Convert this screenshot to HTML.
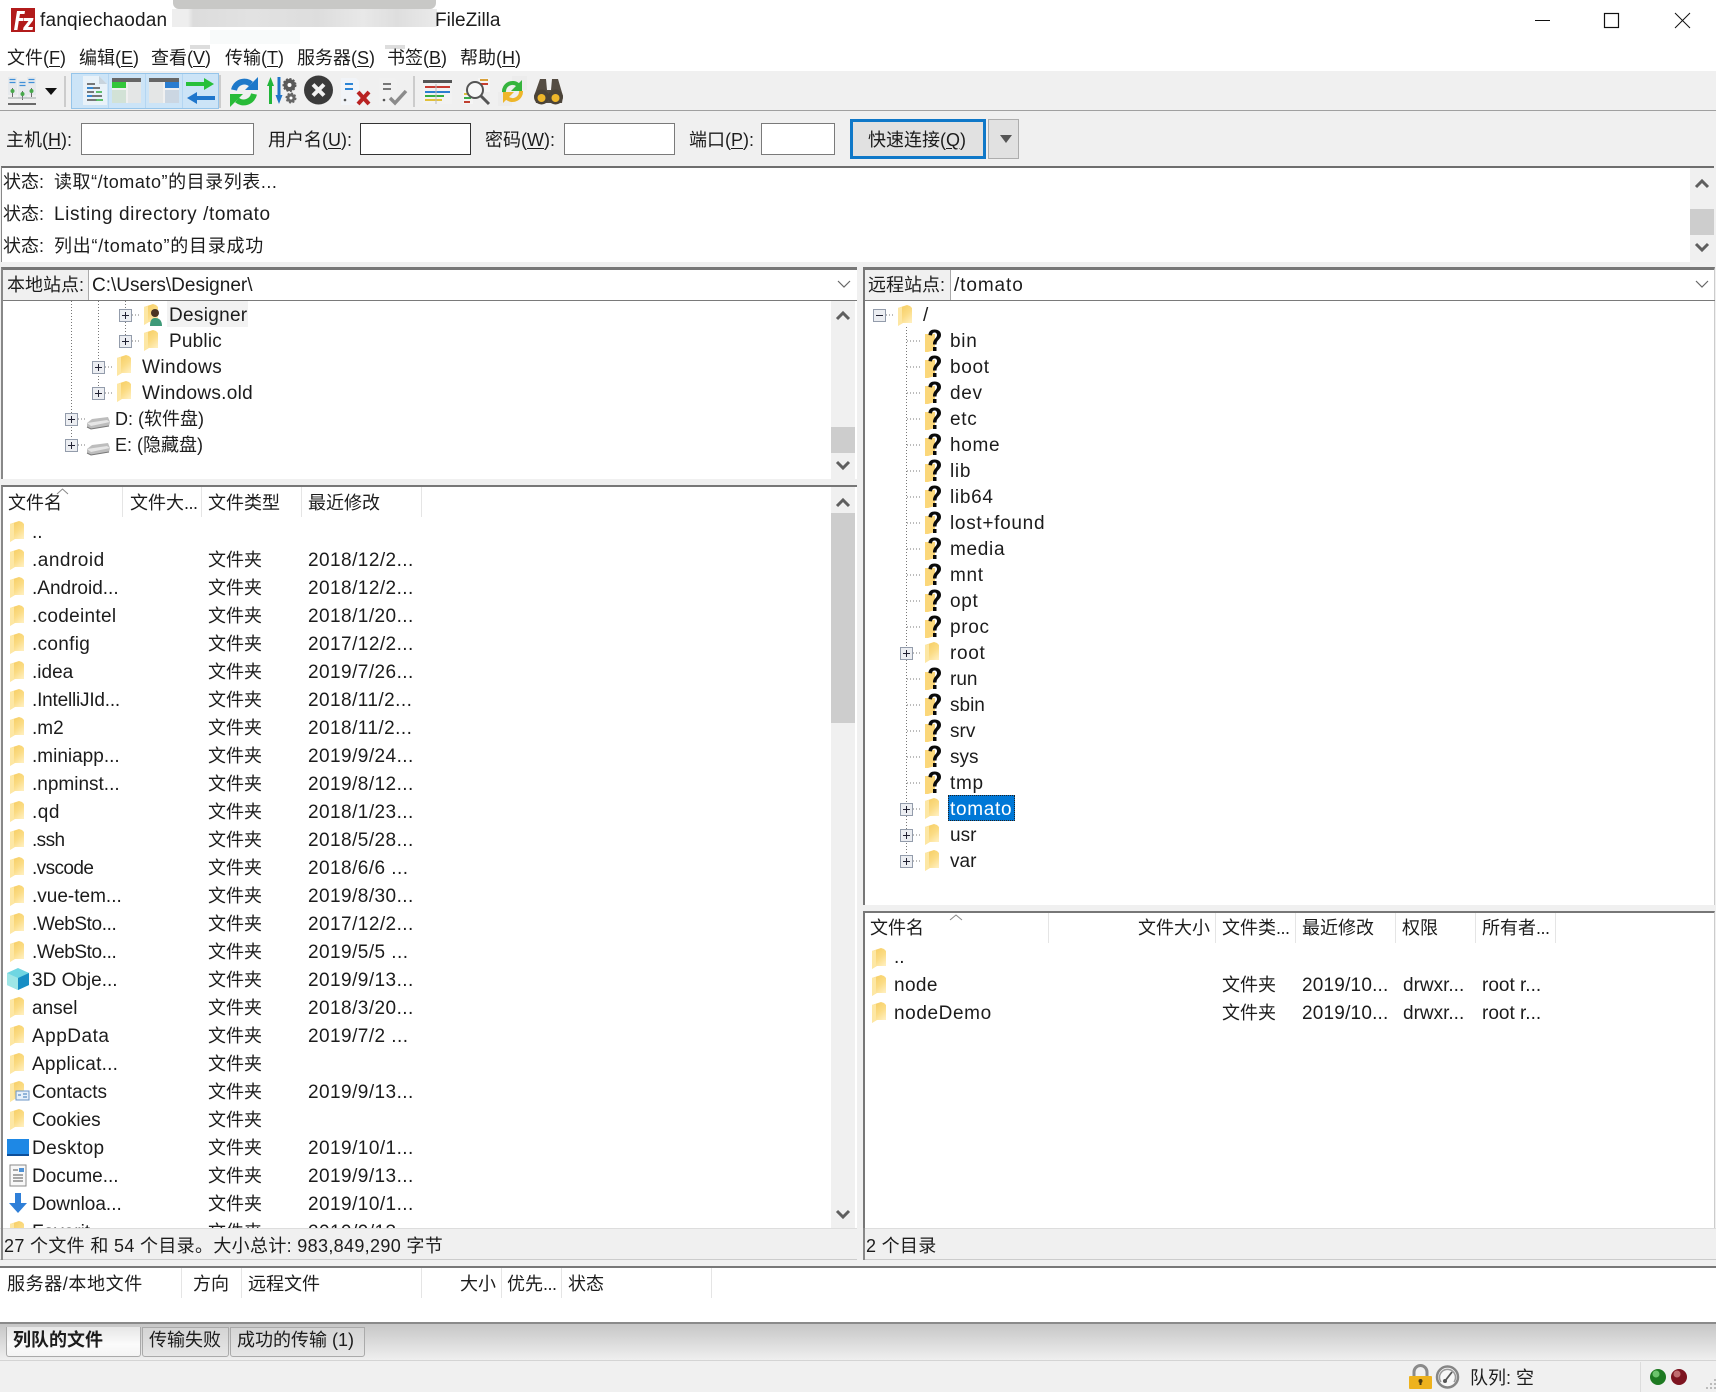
<!DOCTYPE html>
<html lang="zh"><head><meta charset="utf-8"><title>FileZilla</title>
<style>
html,body{margin:0;padding:0;width:1716px;height:1392px;overflow:hidden;background:#f0f0f0}
body{position:relative;font-family:"Liberation Sans","Noto Sans CJK SC",sans-serif;font-size:19px;color:#1c1c1c}
.b,.t{position:absolute}
.t{height:28px;line-height:28px;white-space:nowrap;margin-top:2px}
.c{font-size:18px;margin-top:1px}
.d{letter-spacing:.45px}
.r{letter-spacing:.7px}
u{text-underline-offset:2px}
i{font-style:normal;letter-spacing:-.5px}
svg{position:absolute;left:0;top:0}
</style></head><body>
<!-- backgrounds -->
<div class="b" style="left:0;top:0;width:1716px;height:71px;background:#fff"></div>
<div class="b" style="left:173px;top:0;width:263px;height:9px;background:#c8c8c6;border-radius:0 0 6px 6px"></div>
<div class="b" style="left:172px;top:9px;width:265px;height:18px;background:linear-gradient(90deg,#eee 0,#eee 6%,#dcdcdc 8%,#e2e2e2 30%,#dddddd 55%,#e8e8e8 72%,#dedede 85%,#eaeaea 100%)"></div>
<div class="b" style="left:210px;top:30px;width:90px;height:14px;background:#f8fafa"></div>
<div class="b" style="left:190px;top:45px;width:20px;height:4px;background:#ddd"></div>
<div class="b" style="left:385px;top:45px;width:20px;height:4px;background:#ddd"></div>
<div class="b" style="left:0;top:110px;width:1716px;height:1px;background:#a0a0a0"></div>
<!-- log -->
<div class="b" style="left:1px;top:166px;width:1713px;height:96px;background:#fff;border-top:2px solid #6e6e6e;border-left:1px solid #888;box-sizing:border-box"></div>
<div class="b" style="left:1690px;top:168px;width:24px;height:94px;background:#f0f0f0"></div>
<div class="b" style="left:1690px;top:209px;width:24px;height:26px;background:#cdcdcd"></div>
<!-- address bars + panels -->
<div class="b" style="left:1px;top:267px;width:856px;height:212px;background:#fff;border-top:3px solid #777;border-left:2px solid #888;box-sizing:border-box"></div>
<div class="b" style="left:863px;top:267px;width:852px;height:638px;background:#fff;border-top:3px solid #777;border-left:2px solid #777;border-right:1px solid #ccc;box-sizing:border-box"></div>
<div class="b" style="left:3px;top:300px;width:854px;height:1px;background:#7a7a7a"></div>
<div class="b" style="left:865px;top:300px;width:850px;height:1px;background:#7a7a7a"></div>
<div class="b" style="left:3px;top:270px;width:85px;height:30px;background:#f0f0f0;border-right:1px solid #aaa"></div>
<div class="b" style="left:865px;top:270px;width:85px;height:30px;background:#f0f0f0;border-right:1px solid #aaa"></div>
<div class="b" style="left:831px;top:301px;width:24px;height:178px;background:#f0f0f0"></div>
<div class="b" style="left:831px;top:427px;width:24px;height:26px;background:#cdcdcd"></div>
<div class="b" style="left:167px;top:301px;width:81px;height:26px;background:#f2f2f2"></div>
<!-- lists -->
<div class="b" style="left:1px;top:485px;width:856px;height:743px;background:#fff;border-top:2px solid #777;border-left:2px solid #888;box-sizing:border-box"></div>
<div class="b" style="left:831px;top:487px;width:24px;height:741px;background:#f0f0f0"></div>
<div class="b" style="left:831px;top:513px;width:24px;height:210px;background:#cdcdcd"></div>
<div class="b" style="left:863px;top:911px;width:852px;height:317px;background:#fff;border-top:2px solid #777;border-left:2px solid #777;border-right:1px solid #ccc;box-sizing:border-box"></div>
<div class="b" style="left:948px;top:795px;width:67px;height:26px;background:#0078d7;outline:1px dotted #222;outline-offset:-1px"></div>
<!-- inputs -->
<div class="b" style="left:81px;top:123px;width:173px;height:32px;background:#fff;border:1px solid #7a7a7a;box-sizing:border-box"></div>
<div class="b" style="left:360px;top:123px;width:111px;height:32px;background:#fff;border:1px solid #333;box-sizing:border-box"></div>
<div class="b" style="left:564px;top:123px;width:111px;height:32px;background:#fff;border:1px solid #7a7a7a;box-sizing:border-box"></div>
<div class="b" style="left:761px;top:123px;width:74px;height:32px;background:#fff;border:1px solid #7a7a7a;box-sizing:border-box"></div>
<div class="b" style="left:850px;top:119px;width:136px;height:40px;background:#e1e1e1;border:3px solid #0f78c8;box-sizing:border-box"></div>
<div class="b" style="left:988px;top:119px;width:31px;height:40px;background:#e1e1e1;border:1px solid #adadad;box-sizing:border-box"></div>
<!-- header separators -->
<div class="b" style="left:122px;top:487px;width:1px;height:30px;background:#e5e5e5"></div>
<div class="b" style="left:201px;top:487px;width:1px;height:30px;background:#e5e5e5"></div>
<div class="b" style="left:301px;top:487px;width:1px;height:30px;background:#e5e5e5"></div>
<div class="b" style="left:421px;top:487px;width:1px;height:30px;background:#e5e5e5"></div>
<div class="b" style="left:1048px;top:913px;width:1px;height:30px;background:#e5e5e5"></div>
<div class="b" style="left:1215px;top:913px;width:1px;height:30px;background:#e5e5e5"></div>
<div class="b" style="left:1295px;top:913px;width:1px;height:30px;background:#e5e5e5"></div>
<div class="b" style="left:1395px;top:913px;width:1px;height:30px;background:#e5e5e5"></div>
<div class="b" style="left:1475px;top:913px;width:1px;height:30px;background:#e5e5e5"></div>
<div class="b" style="left:1555px;top:913px;width:1px;height:30px;background:#e5e5e5"></div>

<svg width="1716" height="1392" viewBox="0 0 1716 1392" fill="none">
<defs>
<linearGradient id="fg" x1="0" y1="0" x2=".6" y2="1"><stop offset="0" stop-color="#f5ca5c"/><stop offset=".6" stop-color="#fbdc85"/><stop offset="1" stop-color="#ffeebb"/></linearGradient>
<symbol id="f" viewBox="0 0 15 21" overflow="visible"><path d="M0 3 9 0 12 1 14 3 14 18 5 18 0 21Z" fill="url(#fg)"/><path d="M0 3 4 2 4 18 0 21Z" fill="#fde7a4"/></symbol>
<symbol id="q" viewBox="0 0 20 26" overflow="visible"><path d="M0 6H10V22L3 24 0 24Z" fill="#fbd77a"/><path d="M3.500 7C3.500 3 6.500 1.500 9.500 1.500 13.500 1.500 16 3.500 16 7 16 11.500 11.500 11.500 11.500 16.500H8C8 10.500 12 10.500 12 7 12 5.500 11 4.500 9.500 4.500 8 4.500 7 5.700 7 7.500Z" fill="#0a0a0a"/><rect x="8" y="19" width="3.500" height="4" fill="#0a0a0a"/></symbol>
<symbol id="p" viewBox="0 0 13 13" overflow="visible"><rect x=".5" y=".5" width="12" height="12" fill="#eceef2" stroke="#939cab"/><path d="M3 6.500H10M6.500 3V10" stroke="#223"/></symbol>
<symbol id="ar" viewBox="0 0 24 12" overflow="visible"><path d="M6 10 12 4 18 10" stroke="#5f5f5f" stroke-width="3"/></symbol>
<symbol id="dr" viewBox="0 0 24 12" overflow="visible"><path d="M6 2 12 8 18 2" stroke="#5f5f5f" stroke-width="3"/></symbol>
<symbol id="dv" viewBox="0 0 23 14" overflow="visible"><path d="M0 7 5 3 21 1 23 6 22 10 4 13 0 11Z" fill="#bdbdbd"/><path d="M0 7 20 4 23 6 4 10Z" fill="#e6e6e6"/><path d="M0 11 4 13 22 10" stroke="#777"/></symbol>
<symbol id="sv" viewBox="0 0 9 20" overflow="visible"><rect width="9" height="18" fill="#e6e9ec"/><path d="M1.500 2.500H7.500M1.500 5.500H7.500" stroke="#3f8fd8" stroke-width="1.300"/><path d="M4.500 11V20" stroke="#6a6a6a"/><circle cx="4.500" cy="14" r="2" fill="#47a84a"/></symbol>
</defs>
<!-- window controls -->
<path d="M1535 20.500H1550" stroke="#111" stroke-width="1"/>
<rect x="1604.500" y="13.500" width="14" height="14" stroke="#111" stroke-width="1.200"/>
<path d="M1675 13 1690 28M1690 13 1675 28" stroke="#111"/>
<!-- fz logo -->
<rect x="11" y="8" width="24" height="24" fill="#b21b1b"/>
<path d="M14 30 17 11H25L24.500 14H20L19.300 18H23.500L23 21H18.800L17.400 30Z M24 18H33.500L33 20.500 28 27H33L32.500 30H23L23.500 27.500 28.500 21H23.500Z" fill="#fff"/>
<!-- toolbar -->
<use href="#sv" x="8" y="77" width="9" height="20"/><use href="#sv" x="18" y="80" width="9" height="20"/><use href="#sv" x="27" y="77" width="9" height="20"/>
<path d="M8 104H36" stroke="#6a6a6a" stroke-width="2"/><path d="M8 98H36" stroke="#a0a8a8" stroke-width="1"/>
<path d="M45 88H57L51 95Z" fill="#111"/>
<path d="M65 76V107" stroke="#a8a8a8"/>
<rect x="71.500" y="73.500" width="147" height="35" fill="#cce4f7" stroke="#96c5ea"/>
<path d="M108.500 74V108M145.500 74V108M182.500 74V108" stroke="#b4d6f2"/>
<path d="M83 76H99L107 84V105H83Z" fill="#e9f2f9"/><path d="M99 76V84H107Z" fill="#c8d4de"/>
<path d="M87 84H95M87 88H100M87 92H94M87 96H102M87 100H97" stroke="#666" stroke-width="1.800"/><path d="M87 88H93M87 96H92" stroke="#2a86d8" stroke-width="1.800"/><path d="M96 92H102M96 100H103" stroke="#4ab757" stroke-width="1.800"/>
<rect x="112" y="78" width="29" height="25" fill="#e4e6e6"/><rect x="112" y="78" width="29" height="4" fill="#666"/><rect x="112" y="82" width="14" height="6" fill="#33c63a"/><rect x="112" y="90" width="14" height="13" fill="#d2e2d6"/><path d="M127 82V103M112 89H126" stroke="#f4f4f4" stroke-width="1.500"/>
<rect x="149" y="78" width="30" height="25" fill="#e4e6e6"/><rect x="149" y="78" width="30" height="4" fill="#666"/><rect x="165" y="82" width="14" height="6" fill="#2a7dd0"/><rect x="165" y="90" width="14" height="13" fill="#cbd6e2"/><path d="M164 82V103M165 89H179" stroke="#f4f4f4" stroke-width="1.500"/>
<path d="M186 82H204V78L214 84 204 90V86H186Z" fill="#27c03a"/><path d="M215 96H197V92L187 98 197 104V100H215Z" fill="#1f76cc"/>
<path d="M220 75V108" stroke="#a8a8a8"/>
<path d="M234 90A10.500 10.500 0 0 1 251 84" stroke="#1d78c9" stroke-width="6"/><path d="M258 77V90H245Z" fill="#1d78c9"/>
<path d="M254 94A10.500 10.500 0 0 1 237 100" stroke="#28bb38" stroke-width="6"/><path d="M230 107V94H243Z" fill="#28bb38"/>
<path d="M270.500 104V84" stroke="#22b53a" stroke-width="3"/><path d="M267 86 270.500 77 274 86Z" fill="#22b53a"/>
<path d="M279 77V97" stroke="#2074c8" stroke-width="3"/><path d="M275.500 95 279 104 282.500 95Z" fill="#2074c8"/>
<circle cx="289.500" cy="85" r="4" fill="#fff" stroke="#5a5a5a" stroke-width="4"/><circle cx="289.500" cy="85" r="6" stroke="#5a5a5a" stroke-width="2" stroke-dasharray="2 1.500"/>
<circle cx="291" cy="98" r="3" fill="#fff" stroke="#666" stroke-width="3"/><circle cx="291" cy="98" r="4.500" stroke="#666" stroke-width="2" stroke-dasharray="2 1.500"/>
<circle cx="318.500" cy="90" r="14.500" fill="#3b3b3b"/><path d="M313 84.500 324 95.500M324 84.500 313 95.500" stroke="#f2f2f2" stroke-width="4"/>
<path d="M341 78H356L359 81V105H341Z" fill="#f1f4f8"/><path d="M345 84H353M345 89H353" stroke="#2b84d6" stroke-width="2"/><circle cx="345" cy="100" r="1.300" fill="#555"/>
<path d="M358 92 369 104M369 92 358 104" stroke="#b92323" stroke-width="4"/>
<path d="M379 78H394L397 81V105H379Z" fill="#f1f1f1"/><path d="M383 84H391M383 89H391" stroke="#777" stroke-width="2"/><circle cx="384" cy="100" r="1.300" fill="#555"/>
<path d="M390 98 395 103 406 91" stroke="#8b8b8b" stroke-width="3.500"/>
<path d="M414 76V107" stroke="#a8a8a8"/>
<rect x="423" y="80" width="29" height="24" fill="#f2f2f2"/><rect x="423" y="80" width="29" height="3" fill="#555"/>
<path d="M425 87H450" stroke="#c83a30" stroke-width="2"/><path d="M425 92H450" stroke="#2b7fd0" stroke-width="2"/><path d="M425 96H444" stroke="#35ae3f" stroke-width="2"/><path d="M425 100H442" stroke="#e2c13a" stroke-width="2"/><path d="M436 84V104" stroke="#bbb"/>
<rect x="478" y="78" width="12" height="14" fill="#f5f5f5"/><path d="M480 80H488" stroke="#d9a13a" stroke-width="2"/><path d="M480 84H488" stroke="#c84030" stroke-width="2"/>
<rect x="463" y="91" width="10" height="13" fill="#f5f5f5"/><path d="M464 94H471" stroke="#e0c040" stroke-width="2"/><path d="M464 98H471" stroke="#38ae48" stroke-width="2"/><path d="M464 102H470" stroke="#c04030" stroke-width="2"/>
<circle cx="475" cy="90" r="8" fill="#f7f7f7" stroke="#555" stroke-width="2"/><path d="M481 96 489 104" stroke="#555" stroke-width="3"/>
<rect x="512" y="76" width="15" height="14" fill="#ececec"/><rect x="498" y="92" width="14" height="14" fill="#ececec"/>
<path d="M504 92A8.500 8.500 0 0 1 518 85" stroke="#35b43d" stroke-width="4"/><path d="M522 80V91H511Z" fill="#35b43d"/><path d="M521 91A8.500 8.500 0 0 1 507 98" stroke="#eeb62a" stroke-width="4"/><path d="M503 103V92H514Z" fill="#eeb62a"/>
<path d="M540 79H546L547 90H551L552 79H558L563 96 562 103H536L534 96Z" fill="#544c42"/>
<circle cx="541.500" cy="97" r="7.500" fill="#4b4338"/><circle cx="555.500" cy="97" r="7.500" fill="#4b4338"/><circle cx="541.500" cy="98" r="4" fill="#eeb62a"/><circle cx="555.500" cy="98" r="4" fill="#eeb62a"/>
<path d="M1000 135H1012L1006 143Z" fill="#555"/>
<!-- log scroll -->
<use href="#ar" x="1690" y="177" width="24" height="12"/><use href="#dr" x="1690" y="242" width="24" height="12"/>
<path d="M838 281 844 287 850 281M1696 281 1702 287 1708 281" stroke="#666" stroke-width="1.200"/>
<use href="#ar" x="831" y="309" width="24" height="12"/><use href="#dr" x="831" y="460" width="24" height="12"/>
<use href="#ar" x="831" y="496" width="24" height="12"/><use href="#dr" x="831" y="1209" width="24" height="12"/>
<!-- left tree -->
<path d="M71.500 301V445M98.500 301V392M125.500 301V340" stroke="#777" stroke-dasharray="1 2"/>
<path d="M132 315H140M132 341H140M105 367H113M105 393H113M78 419H86M78 445H86" stroke="#777" stroke-dasharray="1 2"/>
<use href="#p" x="119" y="309" width="13" height="13"/><use href="#p" x="119" y="335" width="13" height="13"/><use href="#p" x="92" y="361" width="13" height="13"/><use href="#p" x="92" y="387" width="13" height="13"/><use href="#p" x="65" y="413" width="13" height="13"/><use href="#p" x="65" y="439" width="13" height="13"/>
<use href="#f" x="144" y="304" width="15" height="21"/><circle cx="155" cy="313" r="4" fill="#4a3422"/><path d="M150 326C150 320 152 318 155 318 159 318 162 320 162 326Z" fill="#3e9a78"/>
<use href="#f" x="144" y="330" width="15" height="21"/><use href="#f" x="117" y="355" width="15" height="21"/><use href="#f" x="117" y="381" width="15" height="21"/>
<use href="#dv" x="87" y="416" width="23" height="14"/><use href="#dv" x="87" y="442" width="23" height="14"/>
<!-- right tree -->
<path d="M906.500 327V860" stroke="#777" stroke-dasharray="1 2"/>
<path d="M886 315H894M907 341H921M907 367H921M907 393H921M907 419H921M907 445H921M907 471H921M907 497H921M907 523H921M907 549H921M907 575H921M907 601H921M907 627H921M907 653H921M907 679H921M907 705H921M907 731H921M907 757H921M907 783H921M907 809H921M907 835H921M907 861H921" stroke="#777" stroke-dasharray="1 2"/>
<rect x="873.500" y="309.500" width="12" height="12" fill="#eceef2" stroke="#939cab"/><path d="M876 315.500H883" stroke="#223"/>
<use href="#f" x="898" y="305" width="15" height="21"/>
<use href="#q" x="925" y="328" width="20" height="26"/><use href="#q" x="925" y="354" width="20" height="26"/><use href="#q" x="925" y="380" width="20" height="26"/><use href="#q" x="925" y="406" width="20" height="26"/><use href="#q" x="925" y="432" width="20" height="26"/><use href="#q" x="925" y="458" width="20" height="26"/><use href="#q" x="925" y="484" width="20" height="26"/><use href="#q" x="925" y="510" width="20" height="26"/><use href="#q" x="925" y="536" width="20" height="26"/><use href="#q" x="925" y="562" width="20" height="26"/><use href="#q" x="925" y="588" width="20" height="26"/><use href="#q" x="925" y="614" width="20" height="26"/>
<use href="#f" x="925" y="642" width="15" height="21"/><use href="#p" x="900" y="647" width="13" height="13"/>
<use href="#q" x="925" y="666" width="20" height="26"/><use href="#q" x="925" y="692" width="20" height="26"/><use href="#q" x="925" y="718" width="20" height="26"/><use href="#q" x="925" y="744" width="20" height="26"/><use href="#q" x="925" y="770" width="20" height="26"/>
<use href="#f" x="925" y="798" width="15" height="21"/><use href="#p" x="900" y="803" width="13" height="13"/>
<use href="#f" x="925" y="824" width="15" height="21"/><use href="#p" x="900" y="829" width="13" height="13"/>
<use href="#f" x="925" y="850" width="15" height="21"/><use href="#p" x="900" y="855" width="13" height="13"/>
<!-- sort arrows -->
<path d="M57 494 62.500 489 68 494M950 920 956 915 962 920" stroke="#888"/>
<!-- left list icons -->
<use href="#f" x="10" y="521" width="15" height="21"/><use href="#f" x="10" y="549" width="15" height="21"/><use href="#f" x="10" y="577" width="15" height="21"/><use href="#f" x="10" y="605" width="15" height="21"/><use href="#f" x="10" y="633" width="15" height="21"/><use href="#f" x="10" y="661" width="15" height="21"/><use href="#f" x="10" y="689" width="15" height="21"/><use href="#f" x="10" y="717" width="15" height="21"/><use href="#f" x="10" y="745" width="15" height="21"/><use href="#f" x="10" y="773" width="15" height="21"/><use href="#f" x="10" y="801" width="15" height="21"/><use href="#f" x="10" y="829" width="15" height="21"/><use href="#f" x="10" y="857" width="15" height="21"/><use href="#f" x="10" y="885" width="15" height="21"/><use href="#f" x="10" y="913" width="15" height="21"/><use href="#f" x="10" y="941" width="15" height="21"/>
<path d="M7 973 18 968 29 973V985L18 990 7 985Z" fill="#6fd6e2"/><path d="M18 978 29 973V985L18 990Z" fill="#178ec4"/><path d="M7 973 18 978V990L7 985Z" fill="#9ee6e6"/>
<use href="#f" x="10" y="997" width="15" height="21"/><use href="#f" x="10" y="1025" width="15" height="21"/><use href="#f" x="10" y="1053" width="15" height="21"/><use href="#f" x="10" y="1081" width="15" height="21"/>
<rect x="16" y="1091" width="13" height="9" fill="#e6f0fa" stroke="#6b95c4"/><path d="M18 1095H21M23 1094H27M23 1097H27" stroke="#3b78b8"/>
<use href="#f" x="10" y="1109" width="15" height="21"/>
<rect x="7" y="1139" width="22" height="16" fill="#1e88e5"/><path d="M7 1155H29" stroke="#0d4f9a" stroke-width="2"/>
<rect x="10" y="1165" width="16" height="21" fill="#f8f8f8" stroke="#8a8a8a"/><path d="M13 1170H18M13 1175H23M13 1178H23M13 1181H23" stroke="#555"/><rect x="19" y="1168" width="5" height="4" fill="#4f92d6"/>
<path d="M15 1193H21V1203H27L18 1213 9 1203H15Z" fill="#2f7fd8"/>
<use href="#f" x="10" y="1221" width="15" height="21"/>
<!-- right list icons -->
<use href="#f" x="872" y="948" width="15" height="21"/><use href="#f" x="872" y="975" width="15" height="21"/><use href="#f" x="872" y="1002" width="15" height="21"/>
</svg>

<!-- title + menu -->
<div class="t" style="left:40px;top:5px;letter-spacing:.2px">fanqiechaodan</div>
<div class="t" style="left:435px;top:5px">FileZilla</div>
<div class="t c" style="left:7px;top:43px">文件(<u>F</u>)</div>
<div class="t c" style="left:79px;top:43px">编辑(<u>E</u>)</div>
<div class="t c" style="left:151px;top:43px">查看(<u>V</u>)</div>
<div class="t c" style="left:225px;top:43px">传输(<u>T</u>)</div>
<div class="t c" style="left:297px;top:43px">服务器(<u>S</u>)</div>
<div class="t c" style="left:387px;top:43px">书签(<u>B</u>)</div>
<div class="t c" style="left:460px;top:43px">帮助(<u>H</u>)</div>
<!-- quickconnect -->
<div class="t c" style="left:6px;top:125px">主机(<u>H</u>):</div>
<div class="t c" style="left:268px;top:125px">用户名(<u>U</u>):</div>
<div class="t c" style="left:485px;top:125px">密码(<u>W</u>):</div>
<div class="t c" style="left:689px;top:125px">端口(<u>P</u>):</div>
<div class="t c" style="left:868px;top:125px">快速连接(<u>Q</u>)</div>
<!-- log -->
<div class="t c" style="left:3px;top:167px">状态:</div><div class="t c" style="left:54px;top:167px;letter-spacing:.55px">读取“/tomato”的目录列表...</div>
<div class="t c" style="left:3px;top:199px">状态:</div><div class="t d" style="left:54px;top:199px;letter-spacing:.6px">Listing directory /tomato</div>
<div class="t c" style="left:3px;top:231px">状态:</div><div class="t c" style="left:54px;top:231px;letter-spacing:.75px">列出“/tomato”的目录成功</div>
<!-- address -->
<div class="t c" style="left:7px;top:270px">本地站点:</div><div class="t" style="left:92px;top:270px">C:\Users\Designer\</div>
<div class="t c" style="left:868px;top:270px">远程站点:</div><div class="t" style="left:954px;top:270px;letter-spacing:.9px">/tomato</div>
<!-- left tree -->
<div class="t" style="left:169px;top:300px;letter-spacing:.3px">Designer</div>
<div class="t" style="left:169px;top:326px;letter-spacing:.2px">Public</div>
<div class="t" style="left:142px;top:352px;letter-spacing:.45px">Windows</div>
<div class="t" style="left:142px;top:378px;letter-spacing:.3px">Windows.old</div>
<div class="t c" style="left:115px;top:404px">D: (软件盘)</div>
<div class="t c" style="left:115px;top:430px">E: (隐藏盘)</div>
<!-- right tree -->
<div class="t" style="left:923px;top:300px">/</div>
<div class="t r" style="left:950px;top:326px">bin</div>
<div class="t r" style="left:950px;top:352px">boot</div>
<div class="t r" style="left:950px;top:378px">dev</div>
<div class="t r" style="left:950px;top:404px">etc</div>
<div class="t r" style="left:950px;top:430px">home</div>
<div class="t r" style="left:950px;top:456px">lib</div>
<div class="t r" style="left:950px;top:482px">lib64</div>
<div class="t r" style="left:950px;top:508px">lost+found</div>
<div class="t r" style="left:950px;top:534px">media</div>
<div class="t r" style="left:950px;top:560px">mnt</div>
<div class="t r" style="left:950px;top:586px">opt</div>
<div class="t r" style="left:950px;top:612px">proc</div>
<div class="t r" style="left:950px;top:638px">root</div>
<div class="t" style="left:950px;top:664px">run</div>
<div class="t" style="left:950px;top:690px">sbin</div>
<div class="t" style="left:950px;top:716px">srv</div>
<div class="t" style="left:950px;top:742px">sys</div>
<div class="t r" style="left:950px;top:768px">tmp</div>
<div class="t r" style="left:950px;top:794px;color:#fff">tomato</div>
<div class="t" style="left:950px;top:820px">usr</div>
<div class="t" style="left:950px;top:846px">var</div>
<!-- left header -->
<div class="t c" style="left:8px;top:488px">文件名</div>
<div class="t c" style="left:130px;top:488px">文件大<i>...</i></div>
<div class="t c" style="left:208px;top:488px">文件类型</div>
<div class="t c" style="left:308px;top:488px">最近修改</div>
<!-- left rows -->
<div class="t" style="left:32px;top:517px">..</div>
<div class="t" style="left:32px;top:545px;letter-spacing:.5px">.android</div><div class="t c" style="left:208px;top:545px">文件夹</div><div class="t d" style="left:308px;top:545px">2018/12/2...</div>
<div class="t" style="left:32px;top:573px">.Android...</div><div class="t c" style="left:208px;top:573px">文件夹</div><div class="t d" style="left:308px;top:573px">2018/12/2...</div>
<div class="t" style="left:32px;top:601px;letter-spacing:.3px">.codeintel</div><div class="t c" style="left:208px;top:601px">文件夹</div><div class="t d" style="left:308px;top:601px">2018/1/20...</div>
<div class="t" style="left:32px;top:629px;letter-spacing:.3px">.config</div><div class="t c" style="left:208px;top:629px">文件夹</div><div class="t d" style="left:308px;top:629px">2017/12/2...</div>
<div class="t" style="left:32px;top:657px">.idea</div><div class="t c" style="left:208px;top:657px">文件夹</div><div class="t d" style="left:308px;top:657px">2019/7/26...</div>
<div class="t" style="left:32px;top:685px;letter-spacing:-.2px">.IntelliJId...</div><div class="t c" style="left:208px;top:685px">文件夹</div><div class="t d" style="left:308px;top:685px">2018/11/2...</div>
<div class="t" style="left:32px;top:713px">.m2</div><div class="t c" style="left:208px;top:713px">文件夹</div><div class="t d" style="left:308px;top:713px">2018/11/2...</div>
<div class="t" style="left:32px;top:741px">.miniapp...</div><div class="t c" style="left:208px;top:741px">文件夹</div><div class="t d" style="left:308px;top:741px">2019/9/24...</div>
<div class="t" style="left:32px;top:769px">.npminst...</div><div class="t c" style="left:208px;top:769px">文件夹</div><div class="t d" style="left:308px;top:769px">2019/8/12...</div>
<div class="t" style="left:32px;top:797px;letter-spacing:.5px">.qd</div><div class="t c" style="left:208px;top:797px">文件夹</div><div class="t d" style="left:308px;top:797px">2018/1/23...</div>
<div class="t" style="left:32px;top:825px;letter-spacing:-.6px">.ssh</div><div class="t c" style="left:208px;top:825px">文件夹</div><div class="t d" style="left:308px;top:825px">2018/5/28...</div>
<div class="t" style="left:32px;top:853px;letter-spacing:-.6px">.vscode</div><div class="t c" style="left:208px;top:853px">文件夹</div><div class="t d" style="left:308px;top:853px">2018/6/6 ...</div>
<div class="t" style="left:32px;top:881px">.vue-tem...</div><div class="t c" style="left:208px;top:881px">文件夹</div><div class="t d" style="left:308px;top:881px">2019/8/30...</div>
<div class="t" style="left:32px;top:909px;letter-spacing:-.4px">.WebSto...</div><div class="t c" style="left:208px;top:909px">文件夹</div><div class="t d" style="left:308px;top:909px">2017/12/2...</div>
<div class="t" style="left:32px;top:937px;letter-spacing:-.4px">.WebSto...</div><div class="t c" style="left:208px;top:937px">文件夹</div><div class="t d" style="left:308px;top:937px">2019/5/5 ...</div>
<div class="t" style="left:32px;top:965px">3D Obje...</div><div class="t c" style="left:208px;top:965px">文件夹</div><div class="t d" style="left:308px;top:965px">2019/9/13...</div>
<div class="t" style="left:32px;top:993px">ansel</div><div class="t c" style="left:208px;top:993px">文件夹</div><div class="t d" style="left:308px;top:993px">2018/3/20...</div>
<div class="t" style="left:32px;top:1021px;letter-spacing:.5px">AppData</div><div class="t c" style="left:208px;top:1021px">文件夹</div><div class="t d" style="left:308px;top:1021px">2019/7/2 ...</div>
<div class="t" style="left:32px;top:1049px;letter-spacing:.25px">Applicat...</div><div class="t c" style="left:208px;top:1049px">文件夹</div>
<div class="t" style="left:32px;top:1077px">Contacts</div><div class="t c" style="left:208px;top:1077px">文件夹</div><div class="t d" style="left:308px;top:1077px">2019/9/13...</div>
<div class="t" style="left:32px;top:1105px">Cookies</div><div class="t c" style="left:208px;top:1105px">文件夹</div>
<div class="t" style="left:32px;top:1133px;letter-spacing:.4px">Desktop</div><div class="t c" style="left:208px;top:1133px">文件夹</div><div class="t d" style="left:308px;top:1133px">2019/10/1...</div>
<div class="t" style="left:32px;top:1161px">Docume...</div><div class="t c" style="left:208px;top:1161px">文件夹</div><div class="t d" style="left:308px;top:1161px">2019/9/13...</div>
<div class="t" style="left:32px;top:1189px">Downloa...</div><div class="t c" style="left:208px;top:1189px">文件夹</div><div class="t d" style="left:308px;top:1189px">2019/10/1...</div>
<div class="t" style="left:32px;top:1217px">Favorit...</div><div class="t c" style="left:208px;top:1217px">文件夹</div><div class="t d" style="left:308px;top:1217px">2019/9/13...</div>
<!-- right header -->
<div class="t c" style="left:870px;top:913px">文件名</div>
<div class="t c" style="left:1138px;top:913px">文件大小</div>
<div class="t c" style="left:1222px;top:913px">文件类<i>...</i></div>
<div class="t c" style="left:1302px;top:913px">最近修改</div>
<div class="t c" style="left:1402px;top:913px">权限</div>
<div class="t c" style="left:1482px;top:913px">所有者<i>...</i></div>
<!-- right rows -->
<div class="t" style="left:894px;top:942px">..</div>
<div class="t" style="left:894px;top:970px;letter-spacing:.4px">node</div><div class="t c" style="left:1222px;top:970px">文件夹</div><div class="t d" style="left:1302px;top:970px;letter-spacing:.2px">2019/10...</div><div class="t" style="left:1403px;top:970px">drwxr...</div><div class="t" style="left:1482px;top:970px">root r...</div>
<div class="t" style="left:894px;top:998px;letter-spacing:.6px">nodeDemo</div><div class="t c" style="left:1222px;top:998px">文件夹</div><div class="t d" style="left:1302px;top:998px;letter-spacing:.2px">2019/10...</div><div class="t" style="left:1403px;top:998px">drwxr...</div><div class="t" style="left:1482px;top:998px">root r...</div>
<!-- status bars -->
<div class="b" style="left:0;top:1228px;width:857px;height:32px;background:#f0f0f0;border-top:1px solid #ddd;border-bottom:1px solid #ccc;box-sizing:border-box"></div>
<div class="b" style="left:863px;top:1228px;width:853px;height:32px;background:#f0f0f0;border-top:1px solid #ddd;border-bottom:1px solid #ccc;box-sizing:border-box"></div>
<div class="b" style="left:1px;top:1228px;width:2px;height:32px;background:#888"></div>
<div class="b" style="left:863px;top:1228px;width:2px;height:32px;background:#888"></div>
<div class="t c" style="left:4px;top:1231px;letter-spacing:.33px">27 个文件 和 54 个目录。大小总计: 983,849,290 字节</div>
<div class="t c" style="left:866px;top:1231px;letter-spacing:.3px">2 个目录</div>
<!-- queue -->
<div class="b" style="left:0;top:1266px;width:1716px;height:58px;background:#fff;border-top:2px solid #777;border-bottom:2px solid #8a8a8a;box-sizing:border-box"></div>
<div class="b" style="left:181px;top:1268px;width:1px;height:30px;background:#e5e5e5"></div>
<div class="b" style="left:241px;top:1268px;width:1px;height:30px;background:#e5e5e5"></div>
<div class="b" style="left:421px;top:1268px;width:1px;height:30px;background:#e5e5e5"></div>
<div class="b" style="left:501px;top:1268px;width:1px;height:30px;background:#e5e5e5"></div>
<div class="b" style="left:561px;top:1268px;width:1px;height:30px;background:#e5e5e5"></div>
<div class="b" style="left:711px;top:1268px;width:1px;height:30px;background:#e5e5e5"></div>
<div class="t c" style="left:7px;top:1269px;letter-spacing:.6px">服务器/本地文件</div>
<div class="t c" style="left:193px;top:1269px">方向</div>
<div class="t c" style="left:248px;top:1269px">远程文件</div>
<div class="t c" style="left:460px;top:1269px">大小</div>
<div class="t c" style="left:507px;top:1269px">优先<i>...</i></div>
<div class="t c" style="left:568px;top:1269px">状态</div>
<!-- tabs -->
<div class="b" style="left:0;top:1324px;width:1716px;height:36px;background:linear-gradient(#c6c6c6,#efefef)"></div>
<div class="b" style="left:0;top:1360px;width:1716px;height:1px;background:#d4d4d4"></div>
<div class="b" style="left:6px;top:1327px;width:135px;height:30px;background:linear-gradient(#e6e6e6,#fbfbfb 60%,#f4f4f4);border:1px solid #aaa;border-top:0;border-radius:0 0 3px 3px;box-sizing:border-box"></div>
<div class="b" style="left:142px;top:1327px;width:87px;height:30px;background:linear-gradient(#d4d4d4,#e6e6e6);border:1px solid #aaa;border-radius:0 0 3px 3px;box-sizing:border-box"></div>
<div class="b" style="left:230px;top:1327px;width:135px;height:30px;background:linear-gradient(#d4d4d4,#e6e6e6);border:1px solid #aaa;border-radius:0 0 3px 3px;box-sizing:border-box"></div>
<div class="t c" style="left:13px;top:1325px;font-weight:bold">列队的文件</div>
<div class="t c" style="left:149px;top:1325px">传输失败</div>
<div class="t c" style="left:237px;top:1325px">成功的传输 (1)</div>
<!-- bottom status -->
<div class="t c" style="left:1470px;top:1363px">队列: 空</div>
<svg width="1716" height="1392" viewBox="0 0 1716 1392" fill="none">
<path d="M1414 1377V1372A6.500 6.500 0 0 1 1427 1372V1377" stroke="#8a8a8a" stroke-width="3"/>
<rect x="1409" y="1376" width="23" height="13" rx="1" fill="#eeb21d"/><circle cx="1420.500" cy="1381" r="2" fill="#4a3a10"/><path d="M1420.500 1381V1385" stroke="#4a3a10" stroke-width="2"/>
<circle cx="1447.500" cy="1377" r="10.500" fill="#f7f7f7" stroke="#858585" stroke-width="2.500"/>
<path d="M1441 1382A8 8 0 1 1 1454 1382" stroke="#9a9a9a" stroke-width="1.500"/>
<path d="M1445 1381 1452 1372" stroke="#555" stroke-width="1.800"/><circle cx="1445" cy="1381" r="2" fill="#555"/>
<path d="M1640.500 1362V1392" stroke="#dcdcdc"/>
<circle cx="1658" cy="1377" r="8" fill="#1e7a22"/><circle cx="1656" cy="1374" r="3.500" fill="#6cc46c"/>
<circle cx="1679" cy="1377" r="8" fill="#7d1420"/><circle cx="1677" cy="1374" r="3.500" fill="#c06c70"/>
<path d="M1714 1380H1716M1710 1384H1716M1706 1388H1716" stroke="#bbb" stroke-width="2" stroke-dasharray="2 2"/>
</svg>
</body></html>
